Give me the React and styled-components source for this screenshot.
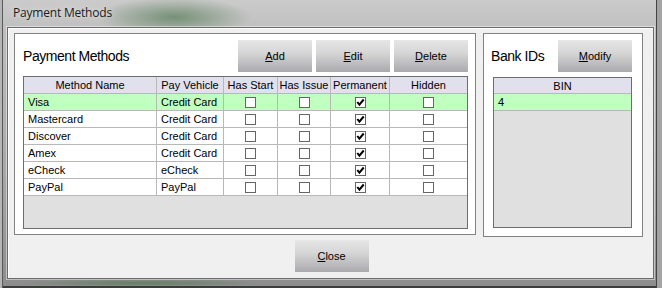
import React from 'react';
import styled, { createGlobalStyle } from 'styled-components';

const GlobalStyle = createGlobalStyle`
  html, body {
    margin: 0;
    padding: 0;
  }
  body {
    width: 662px;
    height: 288px;
    overflow: hidden;
    background: #9a9a9a;
  }
  * {
    box-sizing: border-box;
  }
`;

const Frame = styled.div`
  width: 662px;
  height: 288px;
  display: flex;
  flex-direction: column;
  padding: 0 8px 9px 7px;
  background:
    radial-gradient(ellipse 78px 20px at 174px 17px, rgba(70, 112, 70, 0.62), rgba(70, 112, 70, 0) 100%),
    radial-gradient(ellipse 120px 4px at 140px 283px, rgba(80, 120, 80, 0.7), rgba(80, 120, 80, 0)),
    linear-gradient(180deg, #cbcbcb 0%, #bdbdbd 12%, #a8a8a8 60%, #8c8c8c 100%);
  box-shadow:
    inset 2px 0 0 #b6b6b6,
    inset 3px 0 0 #5a5a5a,
    inset -5px 0 0 #a4a4a4,
    inset -6px 0 0 #434343,
    inset 0 -2px 0 #3c3c3c;
  font-family: "Liberation Sans", Arial, sans-serif;
`;

const TitleBar = styled.div`
  height: 27px;
  display: flex;
  align-items: center;
  padding: 0 0 2px 6px;
  font-family: "Open Sans", "Noto Sans", sans-serif;
  font-size: 12px;
  letter-spacing: -0.2px;
  color: #1c1c1c;
  text-shadow: 0 0 6px rgba(255, 255, 255, 0.8);
`;

const Client = styled.div`
  flex: 1;
  display: flex;
  flex-direction: column;
  padding: 5px 10px 0 6px;
  background: #f0f0f0;
  border: 1px solid #6b6b6b;
  box-shadow: inset 1px 1px 0 #ffffff, 0 0 0 1px rgba(255, 255, 255, 0.45);
`;

const Panels = styled.div`
  display: flex;
  align-items: flex-start;
  gap: 7px;
`;

const Panel = styled.div`
  width: ${p => p.$width}px;
  height: ${p => p.$height}px;
  display: flex;
  flex-direction: column;
  padding: ${p => p.$pad};
  background: #ffffff;
  border: 1px solid #828282;
`;

const PanelHead = styled.div`
  display: flex;
  align-items: center;
  gap: 4px;
  height: 32px;
`;

const Label = styled.div`
  flex: 1;
  margin-left: ${p => p.$shift || 0}px;
  font-size: 14px;
  letter-spacing: -0.45px;
  color: #000;
`;

const Button = styled.button`
  width: 74px;
  height: 32px;
  padding: 0;
  border: none;
  background: linear-gradient(180deg, #e6e6e6 0%, #d6d6d6 40%, #aaaaae 100%);
  font-family: "Liberation Sans", Arial, sans-serif;
  font-size: 11px;
  color: #000;
  cursor: pointer;

  u {
    text-decoration: underline;
  }
`;

const Grid = styled.div`
  height: ${p => p.$height}px;
  margin-top: ${p => p.$gap}px;
  background: #e0e0e0;
  border: 1px solid #6d6d6d;
  overflow: hidden;
`;

const Row = styled.div`
  display: grid;
  grid-template-columns: ${p => p.$cols};
  height: ${p => p.$h}px;
  background: ${p => (p.$head ? '#e1e1ee' : p.$selected ? '#c0ffc0' : '#ffffff')};
`;

const Cell = styled.div`
  display: flex;
  align-items: center;
  justify-content: ${p => (p.$center ? 'center' : 'flex-start')};
  padding: 0 4px;
  border-bottom: 1px solid #b8b8b8;
  border-right: 1px solid #b8b8b8;
  font-size: 11px;
  color: #000;
  white-space: nowrap;
  overflow: hidden;

  &:last-child {
    border-right: none;
  }
`;

const Box = styled.span`
  width: 11px;
  height: 11px;
  display: inline-flex;
  align-items: center;
  justify-content: center;
  background: #ffffff;
  border: 1px solid #666666;
`;

const Footer = styled.div`
  display: flex;
  justify-content: center;
  padding: 3px 0 0 6px;
`;

const cols = '133px 67px 54px 53px 59px 77px';

const methods = [
  { name: 'Visa', vehicle: 'Credit Card', selected: true },
  { name: 'Mastercard', vehicle: 'Credit Card' },
  { name: 'Discover', vehicle: 'Credit Card' },
  { name: 'Amex', vehicle: 'Credit Card' },
  { name: 'eCheck', vehicle: 'eCheck' },
  { name: 'PayPal', vehicle: 'PayPal' }
];

const Check = ({ checked }) => (
  <Box>
    {checked && (
      <svg width="9" height="9" viewBox="0 0 9 9">
        <polyline points="1.3,4 3.4,6.7 7.7,1.5" fill="none" stroke="#000" strokeWidth="2" />
      </svg>
    )}
  </Box>
);

const Mnemonic = ({ text }) => (
  <span>
    <u>{text[0]}</u>
    {text.slice(1)}
  </span>
);

export default function App() {
  return (
    <Frame>
      <GlobalStyle />
      <TitleBar>Payment Methods</TitleBar>
      <Client>
        <Panels>
          <Panel $width={462} $height={202} $pad="6px 7px 5px 8px">
            <PanelHead>
              <Label>Payment Methods</Label>
              <Button><Mnemonic text="Add" /></Button>
              <Button><Mnemonic text="Edit" /></Button>
              <Button><Mnemonic text="Delete" /></Button>
            </PanelHead>
            <Grid $height={153} $gap={4}>
              <Row $cols={cols} $h={17} $head>
                {['Method Name', 'Pay Vehicle', 'Has Start', 'Has Issue', 'Permanent', 'Hidden'].map(h => (
                  <Cell key={h} $center>{h}</Cell>
                ))}
              </Row>
              {methods.map(m => (
                <Row key={m.name} $cols={cols} $h={17} $selected={m.selected}>
                  <Cell>{m.name}</Cell>
                  <Cell>{m.vehicle}</Cell>
                  <Cell $center><Check /></Cell>
                  <Cell $center><Check /></Cell>
                  <Cell $center><Check checked /></Cell>
                  <Cell $center><Check /></Cell>
                </Row>
              ))}
            </Grid>
          </Panel>
          <Panel $width={160} $height={204} $pad="6px 10px 7px 9px">
            <PanelHead>
              <Label $shift={-2}>Bank IDs</Label>
              <Button><Mnemonic text="Modify" /></Button>
            </PanelHead>
            <Grid $height={151} $gap={5}>
              <Row $cols="1fr" $h={16} $head>
                <Cell $center>BIN</Cell>
              </Row>
              <Row $cols="1fr" $h={17} $selected>
                <Cell>4</Cell>
              </Row>
            </Grid>
          </Panel>
        </Panels>
        <Footer>
          <Button><Mnemonic text="Close" /></Button>
        </Footer>
      </Client>
    </Frame>
  );
}
